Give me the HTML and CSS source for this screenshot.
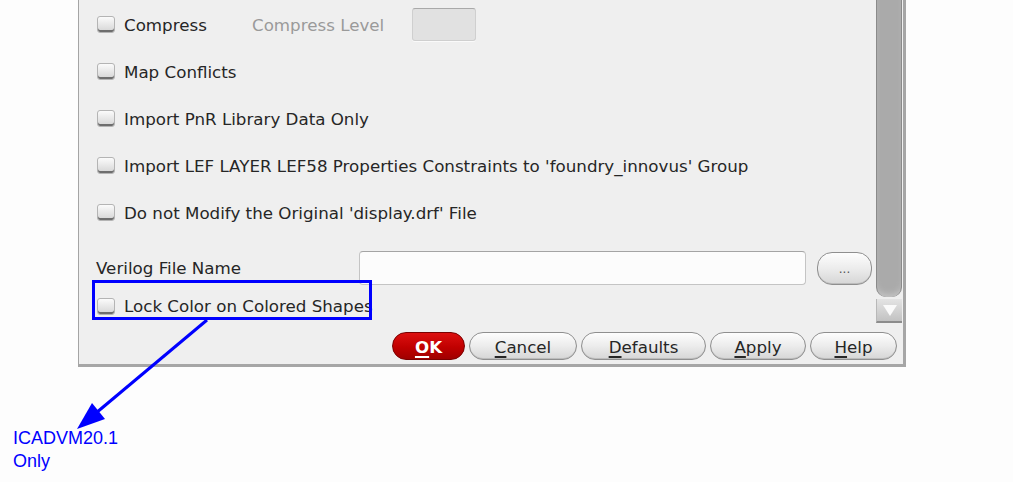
FILE: index.html
```html
<!DOCTYPE html>
<html>
<head>
<meta charset="utf-8">
<link rel="stylesheet" href="styles.css">
</head>
<body>
<div class="page">
  <div class="dialog">
    <div class="main">
      <div class="form">
        <div class="row">
          <span class="cb"></span><span class="lbl lbl-compress">Compress</span>
          <span class="lbl lbl-dim">Compress Level</span>
          <span class="small-input"></span>
        </div>
        <div class="row"><span class="cb"></span><span class="lbl">Map Conflicts</span></div>
        <div class="row"><span class="cb"></span><span class="lbl">Import PnR Library Data Only</span></div>
        <div class="row"><span class="cb"></span><span class="lbl">Import LEF LAYER LEF58 Properties Constraints to 'foundry_innovus' Group</span></div>
        <div class="row"><span class="cb"></span><span class="lbl">Do not Modify the Original 'display.drf' File</span></div>
        <div class="row-file">
          <span class="file-lbl">Verilog File Name</span>
          <span class="file-input"></span>
          <span class="btn btn-browse">...</span>
        </div>
        <div class="row-lock"><span class="cb"></span><span class="lbl">Lock Color on Colored Shapes</span></div>
      </div>
      <div class="scrollbar">
        <div class="thumb"></div>
        <div class="down"><span class="tri"></span></div>
      </div>
    </div>
    <div class="buttons">
      <span class="btn btn-ok"><u>O</u>K</span>
      <span class="btn btn-cancel"><u>C</u>ancel</span>
      <span class="btn btn-defaults"><u>D</u>efaults</span>
      <span class="btn btn-apply"><u>A</u>pply</span>
      <span class="btn btn-help"><u>H</u>elp</span>
    </div>
  </div>
  <div class="note">ICADVM20.1<br>Only</div>
  <svg class="overlay" width="1013" height="482" viewBox="0 0 1013 482">
    <rect x="93.5" y="281.5" width="277" height="37" fill="none" stroke="#0000ff" stroke-width="3"/>
    <line x1="207" y1="320" x2="96" y2="413" stroke="#0000ff" stroke-width="3"/>
    <polygon points="77,429 92,403 105,419" fill="#0000ff"/>
  </svg>
</div>
</body>
</html>
```
FILE: styles.css
```css
html, body {
  margin: 0;
  padding: 0;
  background: #fdfdfd;
}
.page {
  position: relative;
  width: 1013px;
  height: 482px;
  overflow: hidden;
  font-family: "DejaVu Sans", sans-serif;
}
.dialog {
  margin-left: 78px;
  width: 828px;
  height: 367px;
  box-sizing: border-box;
  background: #efefef;
  border-left: 1px solid #a4a4a4;
  border-right: 3px solid #a6a6a6;
  border-bottom: 3px solid #a6a6a6;
  display: flex;
  flex-direction: column;
}
.main {
  display: flex;
  height: 323px;
}
.form {
  flex: 1;
  padding-left: 17px;
  padding-top: 1px;
}
.row {
  height: 47px;
  display: flex;
  align-items: center;
}
.cb {
  width: 16px;
  height: 15px;
  margin-left: 1px;
  border: 1px solid #b4b4b4;
  border-radius: 3px;
  background: linear-gradient(#fbfbfb, #d4d4d4);
  box-shadow: inset 0 -2px 0 #6e6e6e;
  flex: none;
}
.lbl {
  margin-left: 9px;
  font-size: 16.7px;
  color: #262626;
  white-space: nowrap;
}
.lbl-compress {
  width: 128px;
}
.lbl-dim {
  margin-left: 0;
  width: 160px;
  color: #9a9a9a;
}
.small-input {
  width: 64px;
  height: 33px;
  box-sizing: border-box;
  border: 1px solid #cfcfcf;
  border-top-color: #a9a9a9;
  border-radius: 3px;
  background: #e1e1e1;
  box-shadow: 0 1px 0 #fafafa;
}
.row-file {
  margin-top: 15px;
  height: 34px;
  display: flex;
  align-items: center;
}
.file-lbl {
  width: 263px;
  font-size: 16.7px;
  color: #262626;
  white-space: nowrap;
}
.file-input {
  width: 447px;
  height: 34px;
  box-sizing: border-box;
  border: 1px solid #c4c4c4;
  border-top-color: #a4a4a4;
  border-radius: 4px;
  background: #fcfcfc;
}
.btn {
  display: flex;
  align-items: center;
  justify-content: center;
  box-sizing: border-box;
  height: 28px;
  border: 1px solid #8f8f8f;
  border-radius: 14px;
  background: linear-gradient(#fdfdfd 0%, #ececec 50%, #d6d6d6 100%);
  box-shadow: inset 0 -1px 0 #bcbcbc;
  font-size: 16.7px;
  color: #262626;
  white-space: nowrap;
  padding-top: 1px;
}
.btn u {
  text-decoration-thickness: 1.5px;
  text-underline-offset: 3px;
}
.btn-browse {
  margin-left: 11px;
  width: 55px;
  height: 33px;
  border-radius: 15px;
  font-size: 12px;
  color: #555;
}
.row-lock {
  margin-top: 11px;
  height: 20px;
  display: flex;
  align-items: center;
}
.scrollbar {
  width: 26px;
  margin-right: 1px;
  display: flex;
  flex-direction: column;
}
.thumb {
  height: 297px;
  box-sizing: border-box;
  background: #aaaaaa;
  border-left: 1px solid #8a8a8a;
  border-right: 1px solid #8a8a8a;
  border-radius: 0 0 10px 10px;
  box-shadow: inset 0 -6px 6px -3px #c4c4c4;
}
.down {
  margin-top: 2px;
  height: 24px;
  box-sizing: border-box;
  background: linear-gradient(#e4e4e4, #c2c2c2);
  border-bottom: 2px solid #8c8c8c;
  border-left: 1px solid #b8b8b8;
  display: flex;
  justify-content: center;
  padding-top: 6px;
}
.tri {
  width: 0;
  height: 0;
  border-left: 7px solid transparent;
  border-right: 7px solid transparent;
  border-top: 11px solid #fafafa;
}
.buttons {
  display: flex;
  justify-content: flex-end;
  gap: 4px;
  padding-right: 6px;
  padding-top: 9px;
}
.btn-ok {
  width: 73px;
  background: linear-gradient(#dc1010 0%, #c00000 55%, #a00000 100%);
  border-color: #7a0000;
  box-shadow: none;
  color: #fff;
  font-weight: bold;
}
.btn-cancel { width: 108px; }
.btn-defaults { width: 125px; }
.btn-apply { width: 96px; }
.btn-help { width: 87px; }
.note {
  margin-top: 60px;
  margin-left: 13px;
  font-family: "Liberation Sans", Arial, sans-serif;
  font-size: 18px;
  line-height: 23px;
  color: #0000ff;
}
.overlay {
  position: absolute;
  left: 0;
  top: 0;
  pointer-events: none;
}
```
